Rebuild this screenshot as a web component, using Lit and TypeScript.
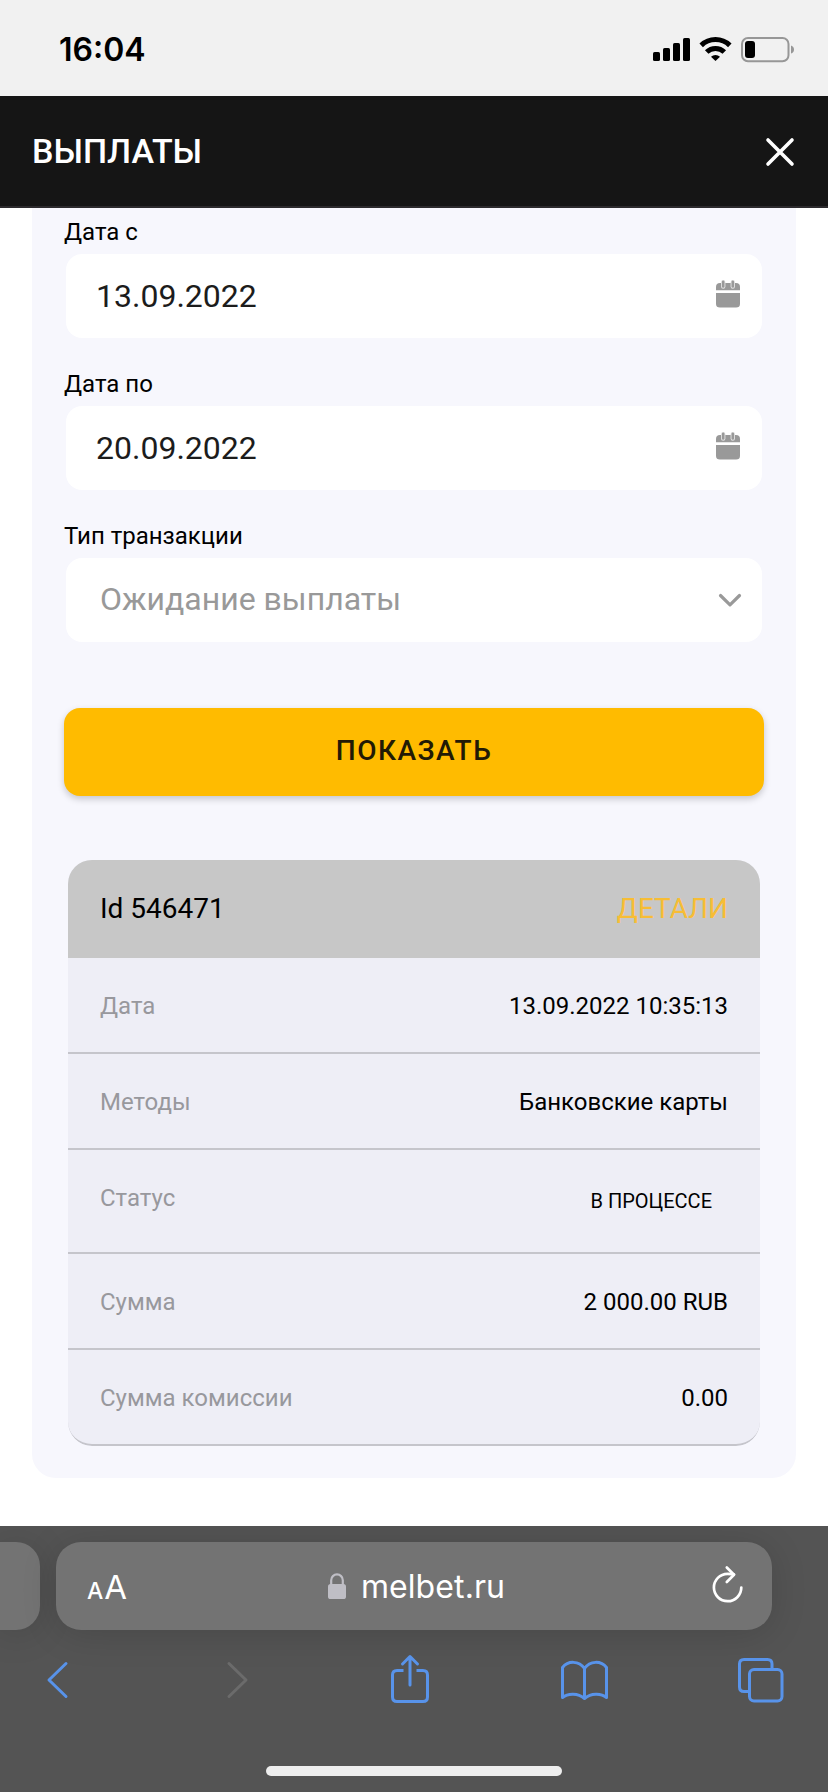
import { LitElement, html, css, svg } from "lit";
import { customElement } from "lit/decorators.js";

const calendar = html`<svg class="calendar" width="24" height="28" viewBox="0 0 24 28">
  <path d="M4 3H20Q24 3 24 7V10.2H0V7Q0 3 4 3Z" fill="#999" />
  <path d="M0 13H24V24Q24 27.600 20 27.600H4Q0 27.600 0 24Z" fill="#999" />
  ${[7.2, 16.8].map(
    (x) => svg`<path d="M${x} 2.200V6.600" stroke="#e4e4e4" stroke-width="4.400" stroke-linecap="round" />
      <path d="M${x} 1.800V6.400" stroke="#999" stroke-width="2.600" stroke-linecap="round" />`
  )}
</svg>`;

const chevron = html`<svg class="chevron" width="24" height="16" viewBox="0 0 24 16">
  <path d="M2.5 2.5L12 11.8L21.5 2.5" fill="none" stroke="#999" stroke-width="3.2" stroke-linecap="round" stroke-linejoin="round" />
</svg>`;

@customElement("status-bar")
class StatusBar extends LitElement {
  static styles = css`
    :host {
      display: flex;
      justify-content: space-between;
      height: 96px;
      background: #f1f1f1;
      color: #000;
    }
    .time {
      margin-left: 59px;
      font: 600 32px/100px Inter, sans-serif;
    }
    .icons {
      display: block;
      margin: 30px 28px 0 0;
    }
  `;
  render() {
    return html`<span class="time">16:04</span>
      <svg class="icons" width="150" height="40" viewBox="650 30 150 40">
        <rect x="653" y="52" width="7" height="9" rx="1.6" />
        <rect x="663" y="48" width="7" height="13" rx="1.6" />
        <rect x="673" y="43" width="7" height="18" rx="1.6" />
        <rect x="683" y="38" width="7" height="23" rx="1.6" />
        <g fill="none" stroke="#000" stroke-width="5">
          <path d="M701.2 45.4A20.5 20.5 0 0 1 729.8 45.4" />
          <path d="M706.7 52A12.6 12.6 0 0 1 724.3 52" />
        </g>
        <path d="M715.5 61L711 56.8A6.4 6.4 0 0 1 720 56.8Z" />
        <rect x="742" y="38" width="46.5" height="23.2" rx="6" fill="none" stroke="#979797" stroke-width="2" />
        <rect x="745" y="41" width="10" height="17" rx="3" />
        <path d="M791 45.5Q794 46.5 794 49.5T791 53.5Z" fill="#979797" />
      </svg>`;
  }
}

@customElement("form-field")
class FormField extends LitElement {
  static properties = { label: {}, value: {}, kind: {} };
  declare label: string;
  declare value: string;
  declare kind: string;
  static styles = css`
    :host {
      display: flex;
      flex-direction: column;
      height: 152px;
    }
    .label {
      height: 46px;
      font-size: 24px;
      line-height: 48px;
      color: #000;
    }
    .box {
      display: flex;
      align-items: center;
      justify-content: space-between;
      height: 84px;
      margin: 0 2px;
      padding: 0 22px 0 30px;
      box-sizing: border-box;
      border-radius: 16px;
      background: #fff;
      color: #1c1c1c;
      font-size: 32px;
    }
    .box.select {
      padding: 0 20px 2px 34px;
      color: #999;
    }
    svg {
      display: block;
    }
    .calendar {
      margin-bottom: 4px;
    }
    .chevron {
      margin-top: 4px;
    }
  `;
  render() {
    const select = this.kind === "select";
    return html`<div class="label">${this.label}</div>
      <div class="box ${select ? "select" : ""}">
        <span>${this.value}</span>${select ? chevron : calendar}
      </div>`;
  }
}

@customElement("payout-card")
class PayoutCard extends LitElement {
  static styles = css`
    :host {
      display: block;
      overflow: hidden;
      border-radius: 24px;
      background: #eeeef6;
      font-size: 24px;
      line-height: 28px;
    }
    .head {
      display: flex;
      justify-content: space-between;
      align-items: center;
      height: 98px;
      padding: 0 32px;
      background: #c7c7c7;
      font-size: 28px;
    }
    .details {
      color: #f7bd35;
    }
    .row {
      display: flex;
      justify-content: space-between;
      padding: 34px 32px 32px;
      border-bottom: 2px solid #c5c5cb;
    }
    .row:last-child {
      border-radius: 0 0 24px 24px;
    }
    .key {
      color: #98989d;
    }
    .badge {
      padding: 3px 16px 5px;
      font-size: 20px;
    }
  `;
  render() {
    const rows = [
      ["Дата", "13.09.2022 10:35:13"],
      ["Методы", "Банковские карты"],
      ["Статус", "В ПРОЦЕССЕ"],
      ["Сумма", "2 000.00 RUB"],
      ["Сумма комиссии", "0.00"],
    ];
    return html`<div class="head"><span>Id 546471</span><span class="details">ДЕТАЛИ</span></div>
      ${rows.map(
        ([k, v]) => html`<div class="row">
          <span class="key">${k}</span><span class=${k === "Статус" ? "badge" : "value"}>${v}</span>
        </div>`
      )}`;
  }
}

@customElement("browser-bar")
class BrowserBar extends LitElement {
  static styles = css`
    :host {
      display: flex;
      flex-direction: column;
      height: 266px;
      overflow: hidden;
      background: #545454;
    }
    .tabs {
      display: flex;
      gap: 16px;
      padding-top: 16px;
    }
    .previous,
    .address {
      height: 88px;
      background: #737373;
      box-shadow: 0 4px 36px rgba(0, 0, 0, 0.14);
    }
    .previous {
      width: 40px;
      border-radius: 0 24px 24px 0;
    }
    .address {
      display: flex;
      align-items: center;
      justify-content: space-between;
      width: 716px;
      padding: 0 28px 0 31px;
      box-sizing: border-box;
      border-radius: 25px;
      color: #fff;
      font-family: Inter, sans-serif;
    }
    .size {
      display: flex;
      align-items: baseline;
      gap: 1px;
      width: 60px;
      padding-top: 1px;
      font-size: 33px;
    }
    .small {
      font-size: 23px;
      font-weight: 500;
    }
    .site {
      display: flex;
      align-items: center;
      gap: 15px;
      margin-right: 26px;
      font-size: 32px;
      letter-spacing: 0.1px;
    }
    svg {
      display: block;
    }
    .reload {
      margin-bottom: 4px;
    }
    .home {
      width: 296px;
      height: 10px;
      margin: 46px auto 0;
      border-radius: 5px;
      background: #eee;
    }
  `;
  render() {
    return html`<div class="tabs">
        <div class="previous"></div>
        <div class="address">
          <span class="size"><span class="small">A</span><span>A</span></span>
          <span class="site">
            <svg width="18" height="26" viewBox="0 0 18 26">
              <rect y="11" width="18" height="15" rx="2.6" fill="#bfbec5" />
              <path d="M3.2 12V7.2a5.8 5.8 0 0 1 11.6 0V12" fill="none" stroke="#bfbec5" stroke-width="2.2" />
            </svg>
            <span>melbet.ru</span>
          </span>
          <svg class="reload" width="32" height="40" viewBox="712 1564 32 40" fill="none" stroke="#fff" stroke-width="2.7" stroke-linecap="round" stroke-linejoin="round">
            <path d="M734 1574.5C733 1574 730 1573.8 727.5 1573.8A13.7 13.7 0 1 0 741.3 1587.5" />
            <path d="M726.8 1567.5L734 1574.8L726.8 1582" />
          </svg>
        </div>
      </div>
      <svg width="828" height="90" viewBox="0 1630 828 90" fill="none" stroke="#5893ea" stroke-width="3" stroke-linecap="round" stroke-linejoin="round">
        <path d="M66 1663.5L49 1680L66 1696.5" />
        <path d="M229 1663.5L246 1680L229 1696.5" stroke="#6b6b6b" />
        <path d="M403.5 1670.5H397Q392.5 1670.5 392.5 1675V1697Q392.5 1701.5 397 1701.5H423Q427.5 1701.5 427.5 1697V1675Q427.5 1670.5 423 1670.5H416.5" stroke-linecap="butt" />
        <path d="M410 1685V1657M402.5 1664L410 1656.5L417.5 1664" />
        <path d="M584.5 1698V1668.5C579 1660.5 568 1660.5 562.5 1667.5V1697.5C568 1693 578 1693 584.5 1698.5C591 1693 601 1693 606.5 1697.5V1667.5C601 1660.5 590 1660.5 584.5 1668.5" />
        <rect x="749.5" y="1669.5" width="32.5" height="31.5" rx="4.5" />
        <path d="M749.5 1691.5H744Q739.5 1691.5 739.5 1687V1664Q739.5 1659.5 744 1659.5H767.5Q772 1659.5 772 1664V1669.5" />
      </svg>
      <div class="home"></div>`;
  }
}

@customElement("app-root")
class AppRoot extends LitElement {
  static styles = css`
    :host {
      display: flex;
      flex-direction: column;
      width: 828px;
      height: 1792px;
      overflow: hidden;
      background: #fff;
      font-family: Roboto, sans-serif;
      color: #000;
    }
    .header {
      display: flex;
      align-items: center;
      justify-content: space-between;
      height: 112px;
      padding: 0 32px;
      box-sizing: border-box;
      border-bottom: 2px solid #2c2a2d;
      background: #151515;
      color: #fff;
    }
    .close {
      margin-top: 2px;
    }
    .title {
      font-size: 34px;
      font-weight: 500;
    }
    .panel {
      display: flex;
      flex-direction: column;
      flex: none;
      height: 1270px;
      margin: 0 32px 48px;
      padding: 0 32px;
      box-sizing: border-box;
      border-radius: 0 0 24px 24px;
      background: #f7f7fd;
    }
    .submit {
      flex: none;
      height: 88px;
      margin-top: 44px;
      padding: 0 0 3px;
      border: 0;
      border-radius: 16px;
      background: #ffbb00;
      box-shadow: 0 3px 7px rgba(0, 0, 0, 0.2);
      color: #221a05;
      font: 500 28px Roboto, sans-serif;
      letter-spacing: 1.5px;
    }
    .card {
      margin: 64px 4px 0;
    }
  `;
  render() {
    return html`<status-bar></status-bar>
      <div class="header">
        <span class="title">ВЫПЛАТЫ</span>
        <svg class="close" width="32" height="32" viewBox="764 136 32 32">
          <path d="M768 140L792 164M792 140L768 164" stroke="#fff" stroke-width="3.6" stroke-linecap="round" />
        </svg>
      </div>
      <div class="panel">
        <form-field label="Дата с" value="13.09.2022"></form-field>
        <form-field label="Дата по" value="20.09.2022"></form-field>
        <form-field label="Тип транзакции" value="Ожидание выплаты" kind="select"></form-field>
        <button class="submit">ПОКАЗАТЬ</button>
        <payout-card class="card"></payout-card>
      </div>
      <browser-bar></browser-bar>`;
  }
}
